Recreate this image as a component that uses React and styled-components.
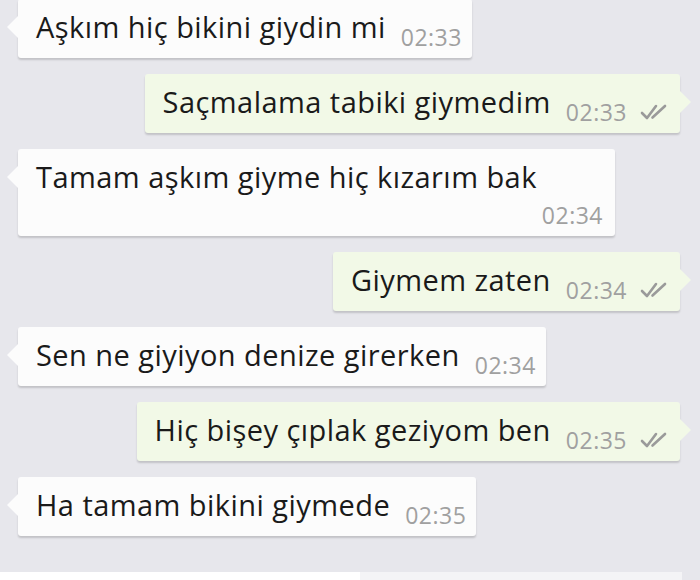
import React from "react";
import styled, { createGlobalStyle, css } from "styled-components";

const Global = createGlobalStyle`
  html, body {
    margin: 0;
    padding: 0;
    background: #e7e7ec;
  }
  body {
    font-family: "Open Sans", Roboto, "Liberation Sans", sans-serif;
    -webkit-font-smoothing: antialiased;
  }
`;

const messages = [
  { id: 1, out: false, text: "Aşkım hiç bikini giydin mi", time: "02:33" },
  { id: 2, out: true, text: "Saçmalama tabiki giymedim", time: "02:33" },
  { id: 3, out: false, text: "Tamam aşkım giyme hiç kızarım bak", time: "02:34", stacked: true },
  { id: 4, out: true, text: "Giymem zaten", time: "02:34" },
  { id: 5, out: false, text: "Sen ne giyiyon denize girerken", time: "02:34" },
  { id: 6, out: true, text: "Hiç bişey çıplak geziyom ben", time: "02:35" },
  { id: 7, out: false, text: "Ha tamam bikini giymede", time: "02:35" },
];

const Screen = styled.div`
  width: 700px;
  height: 580px;
  display: flex;
  flex-direction: column;
  overflow: hidden;
  background: #e7e7ec;
`;

const Chat = styled.div`
  flex: 1;
  display: flex;
  flex-direction: column;
  gap: 16px;
  margin-top: -1px;
  padding: 0 20px 0 18px;
`;

const Bubble = styled.div`
  position: relative;
  box-sizing: border-box;
  display: flex;
  flex-direction: ${(p) => (p.$stacked ? "column" : "row")};
  align-items: flex-start;
  align-self: ${(p) => (p.$out ? "flex-end" : "flex-start")};
  background: ${(p) => (p.$out ? "#f2f9e7" : "#fcfcfc")};
  border-radius: 3px;
  box-shadow: 0 2px 2px rgba(0, 0, 0, 0.16);
  padding: 12px ${(p) => (p.$out ? "12px" : "10px")} ${(p) => (p.$stacked ? "10px" : "15px")} 18px;
  ${(p) =>
    p.$stacked &&
    css`
      width: 597px;
    `}

  &::before {
    content: "";
    position: absolute;
    top: 17px;
    border-top: 11px solid transparent;
    border-bottom: 11px solid transparent;
    ${(p) =>
      p.$out
        ? css`
            right: -11px;
            border-left: 11px solid #f2f9e7;
          `
        : css`
            left: -11px;
            border-right: 11px solid #fcfcfc;
          `}
  }
`;

const Text = styled.span`
  font-size: 29px;
  line-height: 32px;
  letter-spacing: 0.45px;
  color: #1a1a1a;
  white-space: nowrap;
`;

const Meta = styled.span`
  display: flex;
  align-items: center;
  gap: 13px;
  margin: 15px 0 -5px 15px;
  ${(p) =>
    p.$stacked &&
    css`
      align-self: flex-end;
      margin: 11px 2px 0 0;
    `}
`;

const Time = styled.span`
  font-size: 23px;
  line-height: 22px;
  letter-spacing: 0.5px;
  color: #a0a0a0;
`;

const Footer = styled.div`
  height: 8px;
  display: flex;
`;

const FooterLeft = styled.div`
  width: 360px;
  background: #ffffff;
`;

const FooterRight = styled.div`
  flex: 1;
  margin-right: 18px;
  background: #f4f4f6;
`;

function Checks() {
  return (
    <svg width="28" height="16" viewBox="0 0 28 16" fill="none">
      <path d="M2 9 L7 14 L16 2" stroke="#9a9a9a" strokeWidth="2.6" strokeLinecap="round" strokeLinejoin="round" />
      <path d="M12.5 13.5 L25 2" stroke="#9a9a9a" strokeWidth="2.6" strokeLinecap="round" />
    </svg>
  );
}

export default function App() {
  return (
    <Screen>
      <Global />
      <Chat>
        {messages.map((m) => (
          <Bubble key={m.id} $out={m.out} $stacked={m.stacked}>
            <Text>{m.text}</Text>
            <Meta $stacked={m.stacked}>
              <Time>{m.time}</Time>
              {m.out && <Checks />}
            </Meta>
          </Bubble>
        ))}
      </Chat>
      <Footer>
        <FooterLeft />
        <FooterRight />
      </Footer>
    </Screen>
  );
}
